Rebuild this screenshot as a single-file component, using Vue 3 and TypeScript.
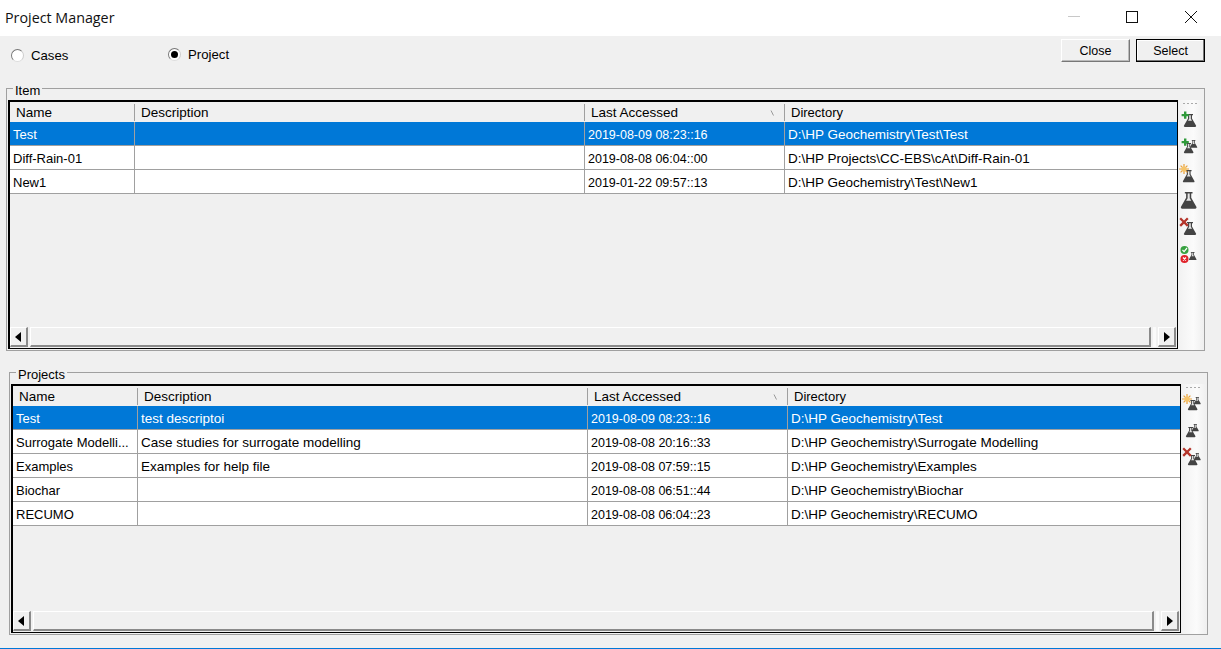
<script setup lang="ts">
type Row = { name: string; description: string; accessed: string; directory: string }
type Tool = { badges: string[]; flasks: number[][] }
type Panel = { id: string; title: string; rows: Row[]; tools: Tool[] }

const flaskPath =
  'M3 0h6v1.2H8v3.3l4 7a1 1 0 0 1-.9 1.5H.9a1 1 0 0 1-.9-1.5l4-7V1.2H3z'

const panels: Panel[] = [
  {
    id: 'item',
    title: 'Item',
    rows: [
      { name: 'Test', description: '', accessed: '2019-08-09 08:23::16', directory: 'D:\\HP Geochemistry\\Test\\Test' },
      { name: 'Diff-Rain-01', description: '', accessed: '2019-08-08 06:04::00', directory: 'D:\\HP Projects\\CC-EBS\\cAt\\Diff-Rain-01' },
      { name: 'New1', description: '', accessed: '2019-01-22 09:57::13', directory: 'D:\\HP Geochemistry\\Test\\New1' },
    ],
    tools: [
      { badges: ['plus'], flasks: [[5, 7, 1]] },
      { badges: ['plus'], flasks: [[11, 6, 0.6], [5, 9, 0.78]] },
      { badges: ['star'], flasks: [[4, 9, 0.95]] },
      { badges: [], flasks: [[2, 4, 1.28]] },
      { badges: ['cross'], flasks: [[5, 7, 1]] },
      { badges: ['check', 'no'], flasks: [[10, 10, 0.62]] },
    ],
  },
  {
    id: 'projects',
    title: 'Projects',
    rows: [
      { name: 'Test', description: 'test descriptoi', accessed: '2019-08-09 08:23::16', directory: 'D:\\HP Geochemistry\\Test' },
      { name: 'Surrogate Modelli...', description: 'Case studies for surrogate modelling', accessed: '2019-08-08 20:16::33', directory: 'D:\\HP Geochemistry\\Surrogate Modelling' },
      { name: 'Examples', description: 'Examples for help file', accessed: '2019-08-08 07:59::15', directory: 'D:\\HP Geochemistry\\Examples' },
      { name: 'Biochar', description: '', accessed: '2019-08-08 06:51::44', directory: 'D:\\HP Geochemistry\\Biochar' },
      { name: 'RECUMO', description: '', accessed: '2019-08-08 06:04::23', directory: 'D:\\HP Geochemistry\\RECUMO' },
    ],
    tools: [
      { badges: ['star'], flasks: [[12, 6, 0.55], [6, 9, 0.78]] },
      { badges: [], flasks: [[10, 6, 0.55], [4, 9, 0.78]] },
      { badges: ['cross'], flasks: [[12, 8, 0.55], [6, 10, 0.78]] },
    ],
  },
]
</script>

<template>
  <div class="window">
    <header class="titlebar">
      <span class="title">Project Manager</span>
      <svg class="controls" width="140" height="36" viewBox="0 0 140 36">
        <path d="M1 16.5h12" stroke="#c8c8c8" fill="none" />
        <rect x="59.5" y="11.5" width="11" height="11" stroke="#111" fill="none" />
        <path d="M118 11l12 12M130 11l-12 12" stroke="#111" fill="none" />
      </svg>
    </header>

    <div class="topbar">
      <label class="radio radio-cases"><span class="dot"></span><span>Cases</span></label>
      <label class="radio radio-project"><span class="dot on"></span><span>Project</span></label>
      <div class="buttons">
        <button class="btn">Close</button>
        <button class="btn primary">Select</button>
      </div>
    </div>

    <section v-for="panel in panels" :key="panel.id" class="group" :class="panel.id">
      <span class="legend">{{ panel.title }}</span>
      <div class="table">
        <div class="row head">
          <div class="cell">Name</div>
          <div class="cell">Description</div>
          <div class="cell sorted">
            Last Accessed
            <svg class="sort" width="5" height="6" viewBox="0 0 5 6"><path d="M1 0.5l2.5 5" stroke="#999" fill="none" /></svg>
          </div>
          <div class="cell">Directory</div>
        </div>
        <div class="rows">
          <div v-for="(row, i) in panel.rows" :key="row.name" class="row body" :class="{ selected: i === 0 }">
            <div class="cell">{{ row.name }}</div>
            <div class="cell">{{ row.description }}</div>
            <div class="cell">{{ row.accessed }}</div>
            <div class="cell">{{ row.directory }}</div>
          </div>
        </div>
        <div class="scrollbar">
          <div class="arrow"><svg width="7" height="10" viewBox="0 0 7 10"><path d="M6 0v10L0 5z" fill="#000" /></svg></div>
          <div class="thumb"></div>
          <div class="dither"></div>
          <div class="arrow"><svg width="7" height="10" viewBox="0 0 7 10"><path d="M1 0v10l6-5z" fill="#000" /></svg></div>
        </div>
      </div>
      <aside class="toolbar">
        <div class="grip"></div>
        <svg v-for="(tool, t) in panel.tools" :key="t" class="tool" width="24" height="27" viewBox="0 0 24 27">
          <g v-for="(f, k) in tool.flasks" :key="k" :transform="`translate(${f[0]} ${f[1]}) scale(${f[2]})`">
            <path :d="flaskPath" fill="#444" />
            <path d="M5.2 1.2h1.6v3.6L8 6.8H4l1.2-2z" fill="#e6e6e6" />
          </g>
          <template v-for="b in tool.badges" :key="b">
            <path v-if="b === 'plus'" d="M5 4.5h2.4v2.4h2.4v2.4H7.4v2.4H5V9.3H2.6V6.9H5z" fill="#2f9a3a" />
            <g v-else-if="b === 'star'">
              <path d="M5 3v10M0 8h10M1.6 4.6l6.8 6.8M8.4 4.6l-6.8 6.8" stroke="#e9a13b" stroke-width="1.2" />
              <circle cx="5" cy="8" r="2.6" fill="#f6c468" />
            </g>
            <path v-else-if="b === 'cross'" d="M2 4.5l3 3 3-3 1.6 1.6-3 3 3 3-1.6 1.6-3-3-3 3-1.6-1.6 3-3-3-3z" fill="#b4342a" transform="translate(0 -2)" />
            <g v-else-if="b === 'check'">
              <circle cx="5.5" cy="8" r="4" fill="#36a13f" />
              <path d="M3.5 8l1.6 1.6L8 6" stroke="#fff" stroke-width="1.2" fill="none" />
            </g>
            <g v-else>
              <circle cx="5.5" cy="17" r="4" fill="#e0222a" />
              <path d="M4 15.5l3 3M7 15.5l-3 3" stroke="#fff" stroke-width="1.2" fill="none" />
            </g>
          </template>
        </svg>
      </aside>
    </section>
  </div>
</template>

<style>
html, body { margin: 0; background: #f0f0f0; }
</style>

<style scoped>
.window {
  width: 1221px;
  height: 649px;
  box-sizing: border-box;
  overflow: hidden;
  background: #f0f0f0;
  border-bottom: 1px solid #0078d7;
  font-family: "Liberation Sans", Arial, sans-serif;
  font-size: 13.5px;
  color: #000;
}
.titlebar {
  height: 36px;
  background: #fff;
  display: flex;
  align-items: center;
  justify-content: space-between;
  padding-left: 5px;
  padding-right: 14px;
}
.title {
  font-family: "Open Sans", "Noto Sans", sans-serif;
  font-size: 14.3px;
  color: #111;
  margin-top: -2px;
}
.controls { display: block; }
.topbar {
  height: 52px;
  box-sizing: border-box;
  display: flex;
  align-items: flex-start;
  padding-left: 11px;
  padding-right: 16px;
}
.radio {
  display: flex;
  align-items: center;
  gap: 7px;
  height: 16px;
  font-size: 13.2px;
}
.radio-cases { width: 157px; margin-top: 11px; }
.radio-project { margin-top: 10px; }
.dot {
  width: 13px;
  height: 13px;
  box-sizing: border-box;
  border-radius: 50%;
  background: #fff;
  border: 1px solid #777;
  border-right-color: #ccc;
  border-bottom-color: #ddd;
  display: flex;
  align-items: center;
  justify-content: center;
}
.dot.on::after {
  content: "";
  width: 7px;
  height: 7px;
  border-radius: 50%;
  background: #000;
}
.buttons {
  margin-left: auto;
  margin-top: 3px;
  display: flex;
  gap: 6px;
}
.btn {
  width: 69px;
  height: 23px;
  box-sizing: border-box;
  padding: 0;
  font: inherit;
  font-size: 12.5px;
  color: #000;
  background: #f0f0f0;
  border: 1px solid;
  border-color: #fff #777 #777 #fff;
  box-shadow: inset -1px -1px 0 #bbb;
}
.btn.primary {
  border-color: #000;
  box-shadow: inset -1px -1px 0 #777, inset 1px 1px 0 #fff;
}
.group {
  position: relative;
  display: flex;
  width: 1199px;
  height: 263px;
  box-sizing: border-box;
  border: 1px solid #a0a0a0;
  padding: 11px 1px 0;
  margin-left: 6px;
}
.group.projects {
  margin-left: 9px;
  margin-top: 21px;
}
.legend {
  position: absolute;
  left: 6px;
  top: -6px;
  padding: 0 2px;
  line-height: 15px;
  font-size: 13px;
  background: #f0f0f0;
}
.table {
  width: 1170px;
  height: 249px;
  box-sizing: border-box;
  border: 2px solid #000;
  border-right-width: 1px;
  border-bottom-width: 1px;
  display: flex;
  flex-direction: column;
  flex: none;
}
.row {
  display: grid;
  grid-template-columns: 125px 450px 200px 1fr;
}
.head { height: 20px; flex: none; }
.head .cell {
  padding-left: 6px;
  border-right: 1px solid #a0a0a0;
  height: 17px;
  line-height: 17px;
  margin-top: 2px;
}
.head .cell:last-child { border-right: none; font-size: 13px; }
.sorted { position: relative; }
.sort { position: absolute; right: 9px; top: 6px; }
.rows { flex: 1; min-height: 0; }
.body {
  height: 24px;
  box-sizing: border-box;
  background: #fff;
  border-bottom: 1px solid #a0a0a0;
  line-height: 25px;
  grid-template-rows: 23px;
}
.body .cell {
  box-sizing: border-box;
  padding-left: 3px;
  border-right: 1px solid #a0a0a0;
  white-space: nowrap;
  overflow: hidden;
}
.body .cell:nth-child(1) { font-size: 13px; }
.body .cell:nth-child(3) { font-size: 12.5px; padding-top: 1px; }
.body .cell:last-child { border-right: none; }
.selected { background: #0078d7; color: #fff; }
.scrollbar {
  height: 20px;
  flex: none;
  display: flex;
  align-items: stretch;
  gap: 2px;
  padding-right: 1px;
  margin-bottom: 1px;
}
.arrow {
  width: 18px;
  flex: none;
  box-sizing: border-box;
  background: #f0f0f0;
  border-top: 1px solid #fff;
  border-left: 1px solid #fff;
  border-right: 2px solid #8a8a8a;
  border-bottom: 2px solid #8a8a8a;
  display: flex;
  align-items: center;
  justify-content: center;
}
.thumb {
  flex: 1;
  box-sizing: border-box;
  background: #f0f0f0;
  border-top: 1px solid #fff;
  border-left: 1px solid #fff;
  border-right: 2px solid #8a8a8a;
  border-bottom: 2px solid #8a8a8a;
}
.dither {
  width: 3px;
  flex: none;
  background: #fafafa;
}
.toolbar {
  width: 25px;
  display: flex;
  flex-direction: column;
  background: linear-gradient(to right, #f2f2f2, #fbfbfb 60%, #f0f0f0);
  margin-left: 1px;
}
.grip {
  height: 4px;
  flex: none;
  box-sizing: border-box;
  margin: 3px 4px 0;
  background: repeating-linear-gradient(to right, #aaa 0 2px, transparent 2px 4px) top / 100% 1px no-repeat;
  width: 15px;
}
.tool { display: block; flex: none; }
</style>
